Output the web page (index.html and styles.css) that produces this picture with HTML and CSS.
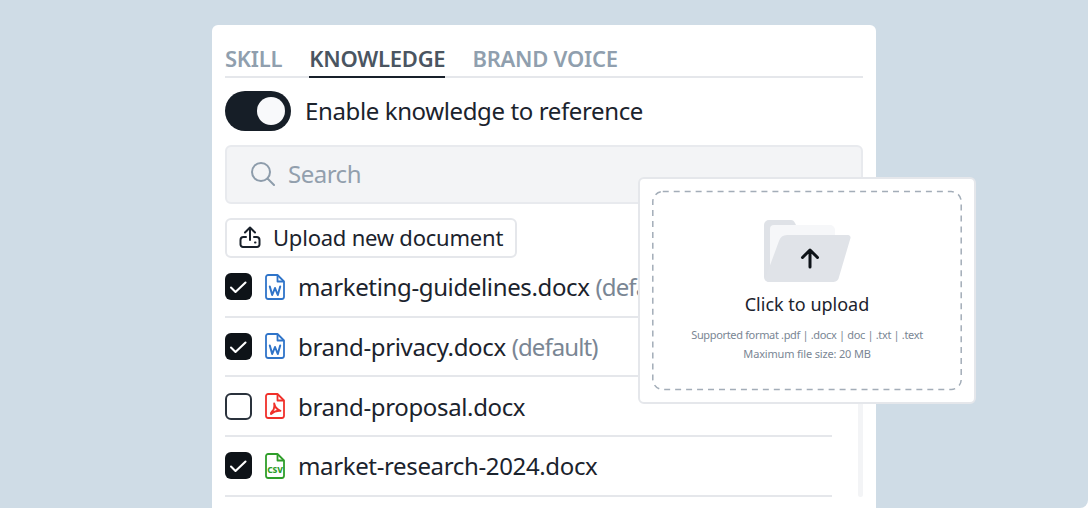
FILE: index.html
```html
<!DOCTYPE html>
<html lang="en">
<head>
<meta charset="utf-8">
<title>Knowledge</title>
<link rel="stylesheet" href="styles.css">
</head>
<body>
<main class="stage">
  <section class="panel">
    <nav class="tabs">
      <span class="tab">SKILL</span>
      <span class="tab tab-active">KNOWLEDGE</span>
      <span class="tab">BRAND VOICE</span>
    </nav>
    <div class="toggle-row">
      <span class="toggle"><span class="knob"></span></span>
      <span class="toggle-label">Enable knowledge to reference</span>
    </div>
    <div class="search">
      <svg class="search-icon" viewBox="0 0 24 24" fill="none" stroke="#8d9cab" stroke-width="2" stroke-linecap="round"><circle cx="10" cy="10" r="9"/><path d="M16.500 16.500l6.500 6.500"/></svg>
      <span>Search</span>
    </div>
    <button class="upload-btn">
      <svg class="upload-icon" viewBox="0 0 22 22" fill="none" stroke="#18202a" stroke-width="2" stroke-linecap="round" stroke-linejoin="round"><path d="M11 14V2M6 6.500 11 1.500l5 5"/><path d="M7 11H4.500A3 3 0 0 0 1.500 14v4.500A2.500 2.500 0 0 0 4 21h14a2.500 2.500 0 0 0 2.500-2.500V14a3 3 0 0 0-3-3H15"/><path d="M16 16.500h.5"/></svg>
      <span>Upload new document</span>
    </button>
    <ul class="files">
      <li class="file">
        <span class="check check-on"><svg viewBox="0 0 27 27" fill="none" stroke="#fff" stroke-width="2.100" stroke-linecap="round" stroke-linejoin="round"><path d="M6 14.500l4.500 4.500 10-9.500"/></svg></span>
        <svg class="doc" viewBox="0 0 20 26" fill="none" stroke="#2f74c9" stroke-width="1.800" stroke-linejoin="round"><path d="M3.200 1h9.300L19 7.500V22.800a2.200 2.200 0 0 1-2.200 2.200H3.200A2.200 2.200 0 0 1 1 22.800V3.200A2.200 2.200 0 0 1 3.200 1Z"/><path d="M12.500 1V7.500H19"/><path d="M4.800 12.500l2.400 8.500 2.800-7 2.800 7 2.400-8.500" stroke-width="2" stroke-linecap="round"/></svg>
        <span class="name">marketing-guidelines.docx <em class="tag">(default)</em></span>
      </li>
      <li class="file">
        <span class="check check-on"><svg viewBox="0 0 27 27" fill="none" stroke="#fff" stroke-width="2.100" stroke-linecap="round" stroke-linejoin="round"><path d="M6 14.500l4.500 4.500 10-9.500"/></svg></span>
        <svg class="doc" viewBox="0 0 20 26" fill="none" stroke="#2f74c9" stroke-width="1.800" stroke-linejoin="round"><path d="M3.200 1h9.300L19 7.500V22.800a2.200 2.200 0 0 1-2.200 2.200H3.200A2.200 2.200 0 0 1 1 22.800V3.200A2.200 2.200 0 0 1 3.200 1Z"/><path d="M12.500 1V7.500H19"/><path d="M4.800 12.500l2.400 8.500 2.800-7 2.800 7 2.400-8.500" stroke-width="2" stroke-linecap="round"/></svg>
        <span class="name">brand-privacy.docx <em class="tag">(default)</em></span>
      </li>
      <li class="file">
        <span class="check"></span>
        <svg class="doc" viewBox="0 0 20 26" fill="none" stroke="#f0302a" stroke-width="1.800" stroke-linejoin="round"><path d="M3.200 1h9.300L19 7.500V22.800a2.200 2.200 0 0 1-2.200 2.200H3.200A2.200 2.200 0 0 1 1 22.800V3.200A2.200 2.200 0 0 1 3.200 1Z"/><path d="M12.500 1V7.500H19"/><path d="M9.200 10.500c.6 3 2.600 6 6.300 7.300-3.500-.3-6.800.6-9.500 3.200-1-1.300 2-2.800 2.800-5 .7-1.900.8-3.600.4-5.500Z" stroke-width="1.900"/></svg>
        <span class="name">brand-proposal.docx</span>
      </li>
      <li class="file">
        <span class="check check-on"><svg viewBox="0 0 27 27" fill="none" stroke="#fff" stroke-width="2.100" stroke-linecap="round" stroke-linejoin="round"><path d="M6 14.500l4.500 4.500 10-9.500"/></svg></span>
        <svg class="doc" viewBox="0 0 20 26" fill="none" stroke="#2f9e2a" stroke-width="1.800" stroke-linejoin="round"><path d="M3.200 1h9.300L19 7.500V22.800a2.200 2.200 0 0 1-2.200 2.200H3.200A2.200 2.200 0 0 1 1 22.800V3.200A2.200 2.200 0 0 1 3.200 1Z"/><path d="M12.500 1V7.500H19"/><text class="csv" x="10" y="20.300" text-anchor="middle">CSV</text></svg>
        <span class="name">market-research-2024.docx</span>
      </li>
    </ul>
    <div class="scroll-track"></div>
  </section>
  <aside class="upload-card">
    <div class="dropzone">
      <svg class="dash" viewBox="0 0 311 200" fill="none"><rect x=".8" y=".8" width="309.400" height="198.400" rx="10" stroke="#a3adb8" stroke-width="1.500" stroke-dasharray="6 5"/></svg>
      <svg class="folder" viewBox="0 0 87 62">
        <path d="M5 0h22c2 0 3 1 4 3l1 2v57H5a5 5 0 0 1-5-5V5a5 5 0 0 1 5-5Z" fill="#dfe2e7"/>
        <path d="M10 5h56a5 5 0 0 1 5 5v30L6 50V9a4 4 0 0 1 4-4Z" fill="#f6f7f9"/>
        <path d="M23 15h61a2.500 2.500 0 0 1 2.500 3L75 57a6 6 0 0 1-5.500 5H5c-2 0-3-1-4-3l14-38a8.500 8.500 0 0 1 8-6Z" fill="#e0e3e8"/>
        <path d="M46 47V30M38.500 37.500l7.500-7.500 7.500 7.500" fill="none" stroke="#0e1318" stroke-width="3" stroke-linecap="round" stroke-linejoin="round"/>
      </svg>
      <p class="drop-title">Click to upload</p>
      <p class="drop-note drop-note-formats">Supported format .pdf | .docx | doc | .txt | .text</p>
      <p class="drop-note drop-note-size">Maximum file size: 20 MB</p>
    </div>
  </aside>
</main>
</body>
</html>
```

FILE: styles.css
```css
* { box-sizing: border-box; }
html, body { margin: 0; height: 100%; }
body { background: #fff; overflow: hidden; font-family: "Noto Sans", sans-serif; }
.stage { position: relative; width: 1088px; height: 508px; background: #cfdce6; border-radius: 0 0 8px 0; display: flex; justify-content: center; padding-top: 25px; overflow: hidden; }
.panel { position: relative; width: 664px; height: 483px; background: #fff; border-radius: 6px 6px 0 0; padding: 13px 13px 0; }
.tabs { display: flex; gap: 27px; height: 40px; border-bottom: 2px solid #e5e7eb; }
.tab { font-size: 22px; font-weight: 600; letter-spacing: -.25px; line-height: 40px; height: 40px; color: #909fae; }
.tab-active { color: #4a5561; border-bottom: 2px solid #18202a; }
.toggle-row { display: flex; align-items: center; gap: 14px; margin-top: 13px; height: 40px; }
.toggle { width: 66px; height: 40px; border-radius: 20px; background: #161e27; display: flex; align-items: center; justify-content: flex-end; padding-right: 6px; }
.knob { width: 28px; height: 28px; border-radius: 50%; background: #f8f9fb; }
.toggle-label { font-size: 24px; letter-spacing: -.38px; line-height: 40px; color: #1b232d; }
.search { display: flex; align-items: center; gap: 13px; height: 59px; margin-top: 14px; padding: 0 0 2px 24px; background: #f3f4f6; border: 2px solid #e8eaee; border-radius: 6px; color: #929fad; font-size: 24px; letter-spacing: -.5px; }
.search-icon { width: 24px; height: 24px; }
.upload-btn { display: flex; align-items: center; gap: 12px; height: 40px; width: 292px; margin-top: 14px; padding: 0 0 2px 12px; background: #fff; border: 2px solid #e5e7eb; border-radius: 6px; font: 400 22px "Noto Sans", sans-serif; letter-spacing: -.22px; color: #1b232d; }
.upload-icon { width: 22px; height: 22px; }
.files { list-style: none; margin: 0; padding: 0; width: 607px; }
.file { display: flex; align-items: center; height: 59.670px; border-bottom: 2px solid #e5e7eb; }
.check { flex: none; width: 27px; height: 27px; border-radius: 6px; border: 2px solid #2a323c; }
.check-on { background: #0e1318; border: 0; }
.check-on svg { display: block; width: 100%; height: 100%; }
.doc { flex: none; width: 20px; height: 26px; margin-left: 13px; }
.csv { font: 800 8.500px "Noto Sans", sans-serif; letter-spacing: -.2px; fill: #2f9e2a; stroke: none; }
.name { margin-left: 13px; font-size: 24px; letter-spacing: -.36px; color: #1b232d; white-space: nowrap; }
.tag { font-style: normal; letter-spacing: -.9px; color: #7a8694; }
.scroll-track { position: absolute; right: 13px; top: 365px; width: 5px; height: 107px; background: #f3f4f6; border-radius: 3px; }
.upload-card { position: absolute; left: 638px; top: 177px; width: 338px; height: 227px; background: #fff; border: 2px solid #e5e7eb; border-radius: 6px; padding: 11px 12px; }
.dropzone { position: relative; height: 201px; display: flex; flex-direction: column; align-items: center; padding-top: 30px; }
.dash { position: absolute; inset: 0; width: 100%; height: 100%; }
.folder { width: 87px; height: 62px; }
.drop-title { margin: 9px 0 0; font-size: 18px; line-height: 26px; color: #1b232d; }
.drop-note { margin: 10px 0 0; font-size: 11px; line-height: 15px; color: #7a8694; white-space: nowrap; }
.drop-note-formats { letter-spacing: -.34px; }
.drop-note-size { margin-top: 4px; letter-spacing: -.17px; }
```
